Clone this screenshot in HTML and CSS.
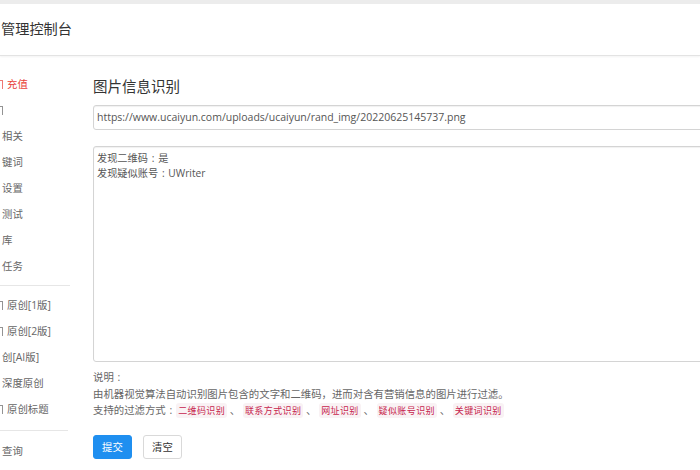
FILE: index.html
```html
<!DOCTYPE html>
<html lang="zh-CN">
<head>
<meta charset="utf-8">
<title>管理控制台</title>
<link rel="stylesheet" href="styles.css">
</head>
<body>
<div class="topstrip"></div>
<header class="header"><span class="brand">管理控制台</span></header>
<div class="layout">
  <nav class="sidebar">
    <div class="item active"><span class="frag"></span>充值</div>
    <div class="item"><span class="frag"></span></div>
    <div class="item">相关</div>
    <div class="item">键词</div>
    <div class="item">设置</div>
    <div class="item">测试</div>
    <div class="item">库</div>
    <div class="item">任务</div>
    <div class="divider"></div>
    <div class="item"><span class="frag"></span>原创[1版]</div>
    <div class="item"><span class="frag"></span>原创[2版]</div>
    <div class="item">创[AI版]</div>
    <div class="item">深度原创</div>
    <div class="item"><span class="frag"></span>原创标题</div>
    <div class="divider second"></div>
    <div class="item">查询</div>
  </nav>
  <main class="main">
    <h1 class="title">图片信息识别</h1>
    <div class="input">https://www.ucaiyun.com/uploads/ucaiyun/rand_img/20220625145737.png</div>
    <div class="textarea">发现二维码<span class="p">:</span>是<br>发现疑似账号<span class="p">:</span>UWriter</div>
    <div class="desc">
      <div>说明<span class="p">:</span></div>
      <div>由机器视觉算法自动识别图片包含的文字和二维码，进而对含有营销信息的图片进行过滤。</div>
      <div>支持的过滤方式<span class="p">:</span><code>二维码识别</code> 、 <code>联系方式识别</code> 、 <code>网址识别</code> 、 <code>疑似账号识别</code> 、 <code>关键词识别</code></div>
    </div>
    <div class="actions">
      <button class="btn primary">提交</button>
      <button class="btn">清空</button>
    </div>
  </main>
</div>
</body>
</html>
```

FILE: styles.css
```css
html, body {
  margin: 0;
  padding: 0;
  background: #fff;
  overflow: hidden;
  width: 700px;
  height: 470px;
}
body {
  font-family: "Open Sans", "Noto Sans CJK SC", sans-serif;
  color: #555;
  font-size: 10.4px;
}
.p {
  display: inline-block;
  width: 1em;
  text-align: center;
}
.topstrip {
  height: 4px;
  background: #ececec;
}
.header {
  height: 51px;
  border-bottom: 1px solid #e3e3e3;
  box-shadow: 0 1px 2px rgba(0,0,0,0.05);
  display: flex;
  align-items: center;
}
.brand {
  font-size: 14.2px;
  color: #333;
  padding-left: 1px;
  line-height: 1;
}
.layout {
  display: flex;
  width: 720px;
}
.sidebar {
  width: 93px;
  flex: none;
  padding-top: 15px;
}
.item {
  height: 26px;
  line-height: 26px;
  padding-left: 2px;
  color: #666;
  font-size: 10.4px;
  white-space: nowrap;
  overflow: hidden;
  display: flex;
  align-items: center;
}
.item.active {
  color: #e8413a;
}
.frag {
  display: inline-block;
  width: 2px;
  height: 8px;
  margin-left: -2px;
  margin-right: 4px;
  border-right: 1px solid currentColor;
  border-top: 1px solid currentColor;
  opacity: 0.7;
}
.divider {
  height: 1px;
  background: #e6e6e6;
  margin: 6px 23px 6px 0;
}
.divider.second {
  margin: 8px 25px 7px 0;
}
.main {
  flex: none;
  width: 627px;
  padding-top: 21px;
}
.title {
  margin: 0 0 8px;
  font-size: 14.5px;
  font-weight: normal;
  line-height: 20px;
  color: #333;
}
.input {
  height: 23px;
  line-height: 23px;
  border: 1px solid #d4d4d4;
  border-radius: 3px;
  padding-left: 3px;
  font-size: 10.5px;
  color: #555;
  box-shadow: inset 0 1px 1px rgba(0,0,0,0.06);
}
.textarea {
  margin-top: 16px;
  height: 206px;
  border: 1px solid #d4d4d4;
  border-radius: 3px;
  padding: 4px 3px;
  line-height: 15px;
  font-size: 10.2px;
  color: #555;
  box-shadow: inset 0 1px 1px rgba(0,0,0,0.06);
}
.desc {
  margin-top: 7px;
  line-height: 16.5px;
  color: #666;
}
code {
  font-family: "Open Sans", "Noto Sans CJK SC", sans-serif;
  font-size: 9px;
  letter-spacing: 0.4px;
  color: #c7254e;
  background: #f9f2f4;
  border-radius: 3px;
  padding: 1px 2px;
}
.actions {
  margin-top: 15px;
  display: flex;
  gap: 11px;
}
.btn {
  width: 39px;
  height: 24px;
  padding: 0;
  border: 1px solid #d9d9d9;
  border-radius: 3px;
  background: #fff;
  color: #333;
  font-family: "Open Sans", "Noto Sans CJK SC", sans-serif;
  font-size: 10.4px;
}
.btn.primary {
  background: #1f8ff0;
  border-color: #1f8ff0;
  color: #fff;
}
```
